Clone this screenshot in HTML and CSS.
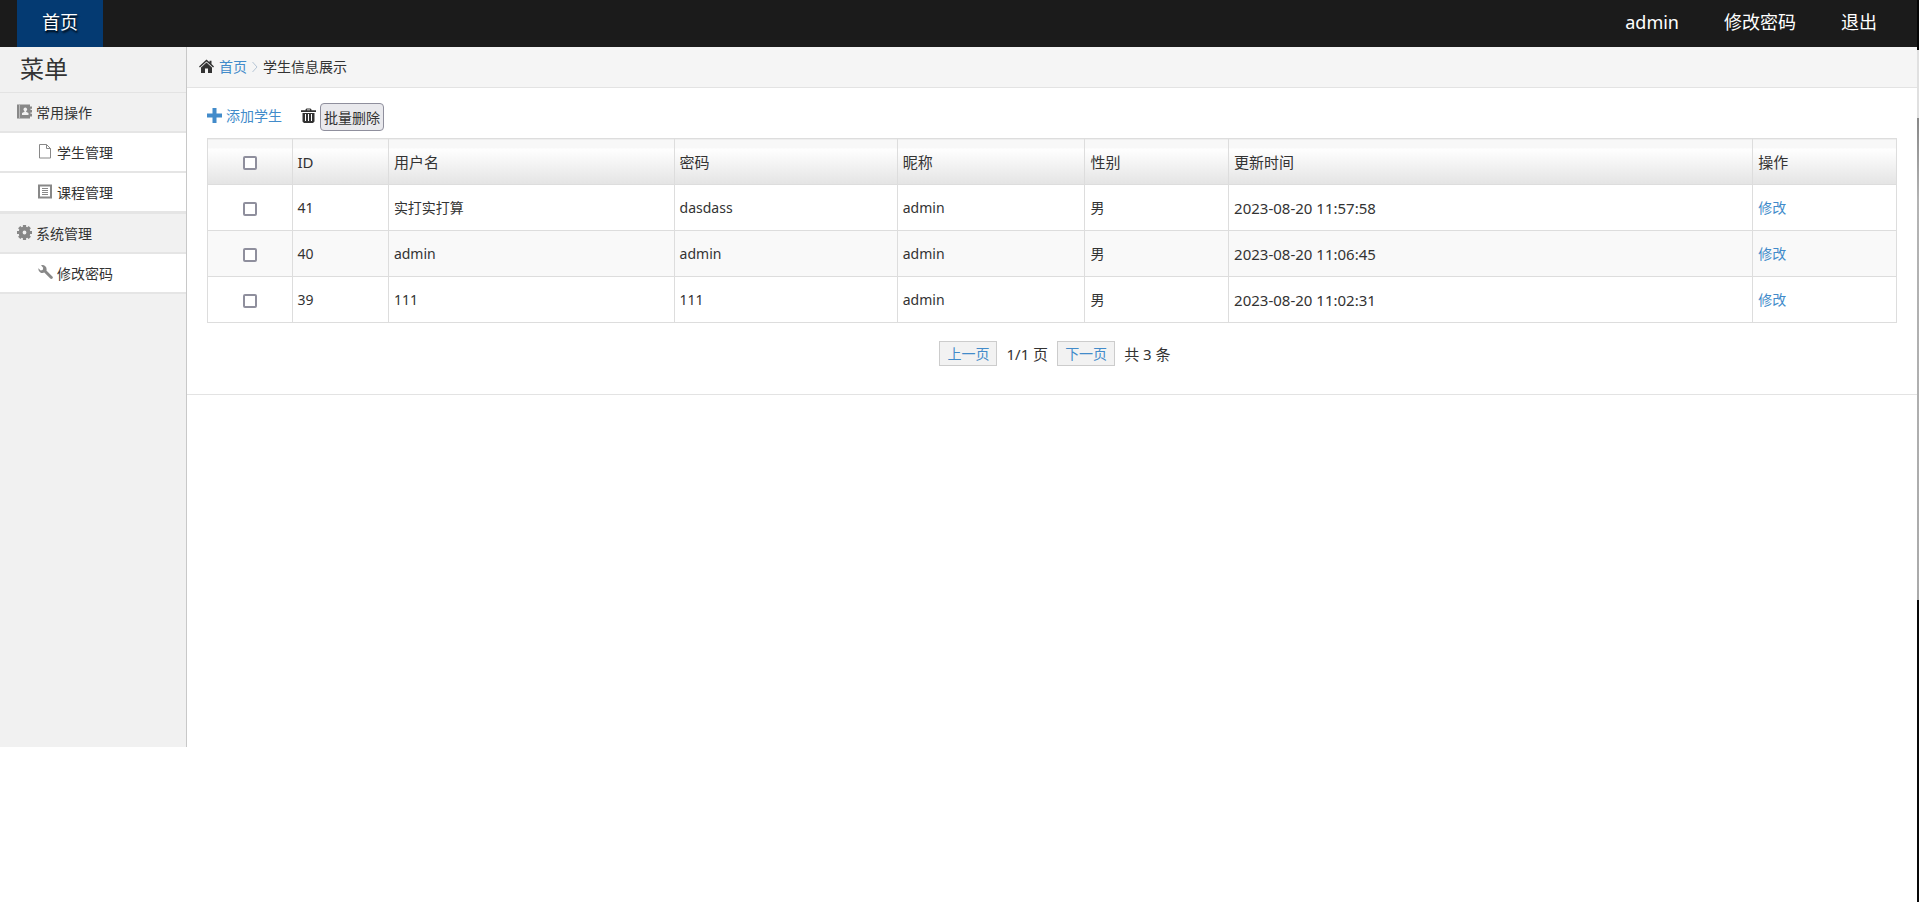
FILE: index.html
```html
<!DOCTYPE html>
<html lang="zh-CN">
<head>
<meta charset="utf-8">
<title>学生信息展示</title>
<link rel="stylesheet" href="styles.css">
</head>
<body>
<header class="topbar">
  <nav><a class="topbar-link active" href="#">首页</a></nav>
  <nav class="topbar-user">
    <a class="topbar-link" href="#">admin</a>
    <a class="topbar-link" href="#">修改密码</a>
    <a class="topbar-link" href="#">退出</a>
  </nav>
</header>
<div class="layout">
  <aside class="sidebar">
    <h1 class="sidebar-title">菜单</h1>
    <ul class="menu">
      <li>
        <a class="menu-group" href="#"><svg class="icon" viewBox="0 0 15 15"><path fill="currentColor" d="M0 .5h13v2h2v2.200h-1.500v1.200H15v2.700h-1.500v1.200H15v2.700h-2v2H0z"/><path stroke="#bbb" d="M2.500.5v14"/><circle cx="8.300" cy="5.400" r="1.800" fill="#f1f1f1"/><path fill="#f1f1f1" d="M7.500 6.500h1.600v1.300l2.400 1.200v2H5V9l2.500-1.200z"/></svg>常用操作</a>
        <ul class="submenu">
          <li><a class="menu-item" href="#"><svg class="icon" viewBox="0 0 15 15"><path fill="none" stroke="currentColor" d="M1.500.5h7l4 4v9.500h-11zM8.500.5v4h4"/></svg>学生管理</a></li>
          <li><a class="menu-item" href="#"><svg class="icon" viewBox="0 0 15 15"><path fill="none" stroke="currentColor" stroke-width="2" d="M1 1.500h12v12H1z"/><path stroke="currentColor" d="M4 4.500h6M4 6.500h6M4 8.500h6M4 10.500h6"/></svg>课程管理</a></li>
        </ul>
      </li>
      <li>
        <a class="menu-group" href="#"><svg class="icon" viewBox="0 0 15 15"><circle cx="7.500" cy="7.500" r="3.900" fill="none" stroke="currentColor" stroke-width="4"/><path stroke="currentColor" stroke-width="3.200" d="M7.500 0v4M7.500 11v4M0 7.500h4M11 7.500h4M2.200 2.200 5 5M10 10l2.800 2.800M12.800 2.200 10 5M5 10l-2.800 2.800"/></svg>系统管理</a>
        <ul class="submenu">
          <li><a class="menu-item" href="#"><svg class="icon" viewBox="0 0 15 15"><path fill="currentColor" d="M3 .3a4.200 4.200 0 0 1 5.400 5.200l6 6c.7.700.6 1.500 0 2.100s-1.400.7-2.100 0l-6-6A4.200 4.200 0 0 1 .4 3.200L2.700 5.400l2-.4.500-2.300z"/></svg>修改密码</a></li>
        </ul>
      </li>
    </ul>
  </aside>
  <main class="main">
    <nav class="crumbs">
      <svg class="icon icon-dark" viewBox="0 0 15 15"><path fill="currentColor" d="M7.500.5 10.500 3.200V1.800h2v3.300L15 7.400l-.9 1L7.500 2.500.9 8.400 0 7.400zM7.500 3.600l5.500 4.900V14H9V9.500H6V14H2V8.500z"/></svg>
      <a class="link" href="#">首页</a>
      <svg class="chevron" viewBox="0 0 6 12"><path fill="none" stroke="currentColor" d="M.5 1 5 6 .5 11"/></svg>
      <span>学生信息展示</span>
    </nav>
    <section class="content">
      <div class="toolbar">
        <a class="link tool-link" href="#"><svg class="icon-link" viewBox="0 0 15 15"><path fill="currentColor" d="M5.500 0h4v5.500H15v4H9.500V15h-4V9.500H0v-4h5.500z"/></svg>添加学生</a>
        <div class="tool-delete">
          <svg class="icon-link icon-dark" viewBox="0 0 15 15"><path fill="currentColor" fill-rule="evenodd" d="M0 2.200h4.500V1.500L5.500.5h4l1 1v.7H15V4H0zM6 1.500v.7h3v-.7zM1.500 5h12v8.500L12 15H3l-1.500-1.500zM4 6v7h1V6zm3 0v7h1V6zm3 0v7h1V6z"/></svg>
          <button class="delete-button" type="button">批量删除</button>
        </div>
      </div>
      <table class="students">
        <colgroup><col class="col-check"><col class="col-id"><col class="col-user"><col class="col-pass"><col class="col-nick"><col class="col-sex"><col class="col-time"><col class="col-action"></colgroup>
        <thead>
          <tr><th class="cell-check"><input class="check" type="checkbox" aria-label="全选"></th><th>ID</th><th>用户名</th><th>密码</th><th>昵称</th><th>性别</th><th>更新时间</th><th>操作</th></tr>
        </thead>
        <tbody>
          <tr><td class="cell-check"><input class="check" type="checkbox" aria-label="选择 41"></td><td>41</td><td>实打实打算</td><td>dasdass</td><td>admin</td><td>男</td><td class="cell-time">2023-08-20 11:57:58</td><td><a class="link" href="#">修改</a></td></tr>
          <tr><td class="cell-check"><input class="check" type="checkbox" aria-label="选择 40"></td><td>40</td><td>admin</td><td>admin</td><td>admin</td><td>男</td><td class="cell-time">2023-08-20 11:06:45</td><td><a class="link" href="#">修改</a></td></tr>
          <tr><td class="cell-check"><input class="check" type="checkbox" aria-label="选择 39"></td><td>39</td><td>111</td><td>111</td><td>admin</td><td>男</td><td class="cell-time">2023-08-20 11:02:31</td><td><a class="link" href="#">修改</a></td></tr>
        </tbody>
      </table>
      <div class="pager">
        <a class="link page-link" href="#">上一页</a>
        <span>1/1 页</span>
        <a class="link page-link" href="#">下一页</a>
        <span>共 3 条</span>
      </div>
    </section>
  </main>
</div>
</body>
</html>
```
FILE: styles.css
```css
* { box-sizing: border-box; }

html {
  min-height: 100%;
  background: #fff linear-gradient(#050505 0 50px, #e0e0e0 50px 118px, #888 118px, #b4b4b4 200px, #aaa 600px, #080808 600px) right top / 2px 100% no-repeat;
}

body {
  margin: 0 2px 0 0;
  color: #333;
  font: 14px/20px "Noto Sans", "Noto Sans CJK SC", sans-serif;
}

a { color: inherit; text-decoration: none; }
ul { margin: 0; padding: 0; list-style: none; }
.link { color: #428bca; }

.topbar {
  display: flex;
  justify-content: space-between;
  height: 47px;
  padding: 0 40px 0 17px;
  background: #1b1b1b;
  color: #fff;
  font-size: 18px;
  line-height: 45px;
}
.topbar-link { display: block; }
.topbar-link.active {
  height: 47px;
  padding: 0 25px;
  background: #043a72;
  text-shadow: 1px 2px 2px #000;
}
.topbar-user { display: flex; gap: 45px; }

.layout { display: flex; align-items: flex-start; }

.sidebar {
  flex: none;
  width: 187px;
  min-height: 700px;
  border-right: 1px solid #c8c8c8;
  background: #f1f1f1;
}
.sidebar-title {
  margin: 0;
  padding: 0 20px 2px;
  border-bottom: 1px solid #e3e3e3;
  font-size: 24px;
  font-weight: 400;
  line-height: 43px;
}
.menu-group, .menu-item {
  display: flex;
  align-items: center;
  gap: 4px;
  height: 40px;
  padding-top: 1px;
  border-bottom: 2px solid #e5e5e5;
}
.menu-group { padding-left: 17px; }
.menu-item { padding-left: 38px; background: #fff; }
.menu > li + li { border-top: 1px solid #e5e5e5; }

.icon { flex: none; width: 15px; height: 15px; margin-bottom: 2px; color: #888; }
.icon-link { flex: none; width: 15px; height: 15px; }
.icon-dark { color: #333; }

.main { flex: 1; min-width: 0; }
.crumbs {
  display: flex;
  align-items: center;
  gap: 5px;
  height: 41px;
  padding-left: 12px;
  border-bottom: 1px solid #e3e3e3;
  background: #f5f5f5;
}
.chevron { width: 6px; height: 12px; color: #b5c5d5; }

.content {
  padding: 15px 20px 28px;
  border-bottom: 1px solid #e3e3e3;
}
.toolbar { display: flex; gap: 19px; margin-bottom: 7px; }
.tool-link, .tool-delete { display: flex; gap: 4px; }
.tool-link { line-height: 26px; }
.icon-link { margin-top: 5px; }
.delete-button {
  height: 28px;
  padding: 1px 3px 0;
  border: 1px solid #8f8f9d;
  border-radius: 4px;
  background: #e9e9ed;
  color: #333;
  font: inherit;
}

.students {
  width: 100%;
  border-collapse: collapse;
  table-layout: fixed;
}
.students th, .students td {
  height: 46px;
  padding: 0 5px;
  border: 1px solid #ddd;
  text-align: left;
}
.students th {
  background: linear-gradient(#f8f8f8 0 9px, #fff 9px, #e4e4e4);
  font-size: 15px;
  font-weight: 400;
}
.students tbody tr:nth-child(even) { background: #f9f9f9; }
.students .cell-check { text-align: center; }
.students .cell-time { font-size: 15px; }
.col-check { width: 5%; }
.col-id { width: 5.7%; }
.col-user { width: 16.9%; }
.col-pass { width: 13.2%; }
.col-nick { width: 11.1%; }
.col-sex { width: 8.5%; }
.col-time { width: 31%; }
.col-action { width: 8.5%; }

.check {
  display: inline-block;
  width: 14px;
  height: 14px;
  margin: 0;
  border: 2px solid #8f8f9d;
  border-radius: 2px;
  background: #fff;
  appearance: none;
  vertical-align: middle;
}
.check:checked { background: #428bca; }

.pager {
  display: flex;
  justify-content: center;
  align-items: center;
  gap: 9px;
  margin-top: 18px;
  padding-left: 6px;
}
.page-link {
  height: 25px;
  padding: 0 7px;
  border: 1px solid #ccc;
  background: #f2f2f2;
  line-height: 23px;
}
.pager span { font-size: 15px; }
```
